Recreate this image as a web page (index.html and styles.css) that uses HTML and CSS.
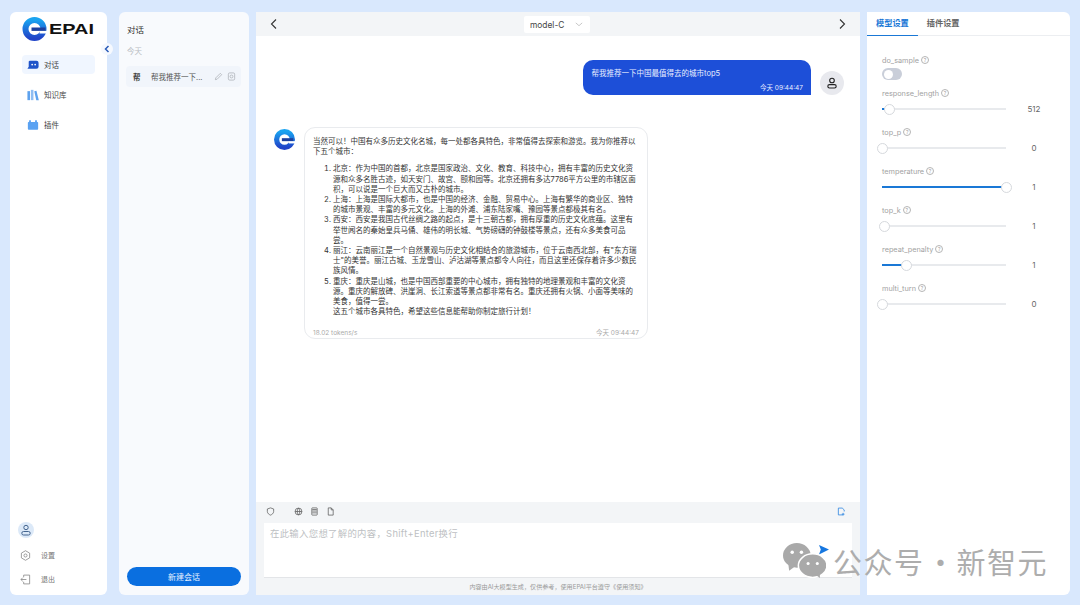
FILE: index.html
```html
<!DOCTYPE html>
<html lang="en">
<head>
    <meta charset="UTF-8">
    <meta name="viewport" content="width=device-width, initial-scale=1.0">
    <title>EPAI</title>
    <link rel="stylesheet" href="styles.css">
</head>
<body>

    <aside class="sidebar">
        <div class="logo">
            <svg class="logo-mark" viewBox="0 0 26 24">
                <defs>
                    <linearGradient id="logoGrad" x1="0" y1="0" x2="0" y2="1">
                        <stop offset="0" stop-color="#1aa3f0"/>
                        <stop offset="1" stop-color="#2044c8"/>
                    </linearGradient>
                </defs>
                <circle cx="12" cy="12" r="9" fill="none" stroke="url(#logoGrad)" stroke-width="6"/>
                <rect x="9" y="10.500" width="14" height="3.400" fill="#1c3f9e"/>
                <rect x="17" y="13.900" width="8" height="2.600" fill="#fff"/>
            </svg>
            <span class="logo-text">EPAI</span>
        </div>
        <button class="collapse-btn">
            <svg viewBox="0 0 10 10"><path d="M6.500 2 3.500 5l3 3" fill="none" stroke="#2a5bb8" stroke-width="1.500"/></svg>
        </button>

        <nav class="nav">
            <div class="nav-item active">
                <svg viewBox="0 0 14 12"><path d="M3 1h8a2.500 2.500 0 0 1 2.500 2.500V8A2.500 2.500 0 0 1 11 10.500H0.500L2 8V2z" fill="#1f54c9"/><circle cx="6" cy="5.500" r="1" fill="#fff"/><circle cx="9.500" cy="5.500" r="1" fill="#fff"/></svg>
                <span>对话</span>
            </div>
            <div class="nav-item">
                <svg viewBox="0 0 14 12"><rect x="0.500" y="1.500" width="3" height="10.500" fill="#5ea2ee"/><rect x="4.500" y="0" width="3" height="12" fill="#8fbdf2"/><path d="m8.500 1.500 2.500-.5 2.800 11h-3z" fill="#5ea2ee"/></svg>
                <span>知识库</span>
            </div>
            <div class="nav-item">
                <svg viewBox="0 0 14 12"><rect x="2.500" y="0.500" width="2" height="3" fill="#4f9bf0"/><rect x="9.500" y="0.500" width="2" height="3" fill="#4f9bf0"/><rect x="1" y="2.500" width="12" height="9" rx="1" fill="#5aa2f2"/></svg>
                <span>插件</span>
            </div>
        </nav>

        <div class="side-bottom">
            <div class="side-avatar">
                <svg viewBox="0 0 12 12"><circle cx="6" cy="3.500" r="2.200" fill="none" stroke="#44658f" stroke-width="1"/><rect x="1.800" y="7.500" width="8.400" height="3.500" rx="1.700" fill="none" stroke="#44658f" stroke-width="1"/></svg>
            </div>
            <div class="side-link">
                <svg viewBox="0 0 12 12"><path d="M6 .8 10.500 3.400v5.200L6 11.200 1.500 8.600V3.400z" fill="none" stroke="#8b8b8b" stroke-width=".9"/><circle cx="6" cy="6" r="1.700" fill="none" stroke="#8b8b8b" stroke-width=".9"/></svg>
                <span>设置</span>
            </div>
            <div class="side-link">
                <svg viewBox="0 0 12 12"><path d="M4 3.500V1.200h6.500v9.600H4V8.500M7 6H1M3 4 1 6l2 2" fill="none" stroke="#8b8b8b" stroke-width=".9"/></svg>
                <span>退出</span>
            </div>
        </div>
    </aside>

    <section class="sessions">
        <h2 class="sessions-title">对话</h2>
        <div class="sessions-day">今天</div>
        <div class="session">
            <span class="session-badge">帮</span>
            <span class="session-name">帮我推荐一下...</span>
            <svg viewBox="0 0 10 10"><path d="M1.500 8.500 2 6.500 7 1.500 8.500 3 3.500 8z" fill="none" stroke="#a9adb3" stroke-width=".8"/></svg>
            <svg viewBox="0 0 10 10"><rect x="1.500" y="1" width="7" height="8" rx="1.500" fill="none" stroke="#a9adb3" stroke-width=".8"/><circle cx="5" cy="5" r="1.600" fill="none" stroke="#a9adb3" stroke-width=".8"/></svg>
        </div>
        <button class="new-chat">新建会话</button>
    </section>

    <main class="chat">
        <header class="chat-top">
            <svg class="chev" viewBox="0 0 10 12"><path d="M7 1.500 2.500 6 7 10.500" fill="none" stroke="#333" stroke-width="1.100"/></svg>
            <div class="model-select">
                <span>model-C</span>
                <svg viewBox="0 0 10 6"><path d="M1 1l4 3.500L9 1" fill="none" stroke="#aaa" stroke-width=".8"/></svg>
            </div>
            <svg class="chev" viewBox="0 0 10 12"><path d="M3 1.500 7.500 6 3 10.500" fill="none" stroke="#333" stroke-width="1.100"/></svg>
        </header>

        <div class="messages">
            <div class="msg-user">
                <div class="bubble-user">
                    <p>帮我推荐一下中国最值得去的城市top5</p>
                    <time>今天 09:44:47</time>
                </div>
                <div class="user-avatar">
                    <svg viewBox="0 0 12 12"><circle cx="6" cy="3.500" r="2.300" fill="none" stroke="#222" stroke-width="1.100"/><rect x="1.800" y="7.600" width="8.400" height="3.400" rx="1.700" fill="none" stroke="#222" stroke-width="1.100"/></svg>
                </div>
            </div>

            <div class="msg-bot">
                <svg class="bot-avatar" viewBox="0 0 24 24">
                    <circle cx="12" cy="12" r="9" fill="none" stroke="url(#logoGrad)" stroke-width="6"/>
                    <rect x="9" y="10.500" width="13" height="3.400" fill="#1c3f9e"/>
                    <rect x="17" y="13.900" width="7" height="2.600" fill="#fff"/>
                </svg>
                <div class="bubble-bot">
                    <p>当然可以&#xFF01;中国有众多历史文化名城&#xFF0C;每一处都各具特色&#xFF0C;非常值得去探索和游览。我为你推荐以下五个城市&#xFF1A;</p>
                    <ol>
                        <li>北京&#xFF1A;作为中国的首都&#xFF0C;北京是国家政治、文化、教育、科技中心&#xFF0C;拥有丰富的历史文化资源和众多名胜古迹&#xFF0C;如天安门、故宫、颐和园等。北京还拥有多达7786平方公里的市辖区面积&#xFF0C;可以说是一个巨大而又古朴的城市。</li>
                        <li>上海&#xFF1A;上海是国际大都市&#xFF0C;也是中国的经济、金融、贸易中心。上海有繁华的商业区、独特的城市景观、丰富的多元文化。上海的外滩、浦东陆家嘴、豫园等景点都极其有名。</li>
                        <li>西安&#xFF1A;西安是我国古代丝绸之路的起点&#xFF0C;是十三朝古都&#xFF0C;拥有厚重的历史文化底蕴。这里有举世闻名的秦始皇兵马俑、雄伟的明长城、气势磅礴的钟鼓楼等景点&#xFF0C;还有众多美食可品尝。</li>
                        <li>丽江&#xFF1A;云南丽江是一个自然景观与历史文化相结合的旅游城市&#xFF0C;位于云南西北部&#xFF0C;有"东方瑞士"的美誉。丽江古城、玉龙雪山、泸沽湖等景点都令人向往&#xFF0C;而且这里还保存着许多少数民族风情。</li>
                        <li>重庆&#xFF1A;重庆是山城&#xFF0C;也是中国西部重要的中心城市&#xFF0C;拥有独特的地理景观和丰富的文化资源。重庆的解放碑、洪崖洞、长江索道等景点都非常有名。重庆还拥有火锅、小面等美味的美食&#xFF0C;值得一尝。<br>这五个城市各具特色&#xFF0C;希望这些信息能帮助你制定旅行计划&#xFF01;</li>
                    </ol>
                    <div class="bubble-foot">
                        <span>18.02 tokens/s</span>
                        <time>今天 09:44:47</time>
                    </div>
                </div>
            </div>
        </div>

        <footer class="composer">
            <div class="tools">
                <svg viewBox="0 0 10 10"><path d="M5 1 8.500 2.200V5C8.500 7 6.500 8.500 5 9 3.500 8.500 1.500 7 1.500 5V2.200z" fill="none" stroke="#555" stroke-width=".8"/></svg>
                <span class="tools-gap"></span>
                <svg viewBox="0 0 10 10"><circle cx="5" cy="5" r="3.800" fill="none" stroke="#555" stroke-width=".8"/><path d="M1.200 5h7.600M5 1.200c-2 2.400-2 5.200 0 7.600 2-2.400 2-5.200 0-7.600" fill="none" stroke="#555" stroke-width=".8"/></svg>
                <svg viewBox="0 0 10 10"><rect x="2" y="1" width="6" height="8" rx=".6" fill="none" stroke="#555" stroke-width=".8"/><path d="M2.500 6.500h5M2.500 4.500h5M2.500 2.800h5" stroke="#555" stroke-width=".8"/></svg>
                <svg viewBox="0 0 10 10"><path d="M2.500 1h3.300L8 3.200V9H2.500zM5.800 1v2.200H8" fill="none" stroke="#555" stroke-width=".8"/></svg>
                <svg class="tools-end" viewBox="0 0 10 10"><path d="M1.500 1.200h4.300L8 3.200V5M6.500 8.800h-5V1.200M6.800 6.500v3M5.300 8h3" fill="none" stroke="#2f86e0" stroke-width=".9"/></svg>
            </div>
            <div class="input-box">
                <span class="placeholder">在此输入您想了解的内容&#xFF0C;Shift+Enter换行</span>
                <svg class="send" viewBox="0 0 10 10"><path d="M0 0 10 4.500 0 9.500 1.800 4.500z" fill="#1677e0"/></svg>
            </div>
            <div class="disclaimer">内容由AI大模型生成&#xFF0C;仅供参考&#xFF0C;使用EPAI平台遵守《使用须知》</div>
        </footer>
    </main>

    <aside class="settings">
        <div class="tabs">
            <span class="tab active">模型设置</span>
            <span class="tab">插件设置</span>
        </div>
        <div class="params">
            <div class="param param-switch">
                <label>do_sample <i class="hint">?</i></label>
                <div class="toggle"></div>
            </div>
            <div class="param">
                <label>response_length <i class="hint">?</i></label>
                <div class="slider-row">
                    <div class="slider"><div class="fill" style="width: 6%"></div><div class="thumb" style="left: 6%"></div></div>
                    <span class="value">512</span>
                </div>
            </div>
            <div class="param">
                <label>top_p <i class="hint">?</i></label>
                <div class="slider-row">
                    <div class="slider"><div class="thumb" style="left: 0%"></div></div>
                    <span class="value">0</span>
                </div>
            </div>
            <div class="param">
                <label>temperature <i class="hint">?</i></label>
                <div class="slider-row">
                    <div class="slider"><div class="fill" style="width: 100%"></div><div class="thumb" style="left: 100%"></div></div>
                    <span class="value">1</span>
                </div>
            </div>
            <div class="param">
                <label>top_k <i class="hint">?</i></label>
                <div class="slider-row">
                    <div class="slider"><div class="thumb" style="left: 2%"></div></div>
                    <span class="value">1</span>
                </div>
            </div>
            <div class="param">
                <label>repeat_penalty <i class="hint">?</i></label>
                <div class="slider-row">
                    <div class="slider"><div class="fill" style="width: 20%"></div><div class="thumb" style="left: 20%"></div></div>
                    <span class="value">1</span>
                </div>
            </div>
            <div class="param">
                <label>multi_turn <i class="hint">?</i></label>
                <div class="slider-row">
                    <div class="slider"><div class="thumb" style="left: 0%"></div></div>
                    <span class="value">0</span>
                </div>
            </div>
        </div>
    </aside>

    <div class="watermark">
        <svg viewBox="0 0 42 34">
            <ellipse cx="13.500" cy="12" rx="13.500" ry="12" fill="#a9a9a9"/>
            <path d="M5 19 6 27 13 22z" fill="#a9a9a9"/>
            <ellipse cx="29" cy="22" rx="14" ry="11.500" fill="#a9a9a9" stroke="#fff" stroke-width="1.500"/>
            <path d="M32 31 36 34 36 28z" fill="#a9a9a9"/>
            <circle cx="9" cy="9" r="1.700" fill="#fff"/>
            <circle cx="18" cy="9" r="1.700" fill="#fff"/>
            <circle cx="24.500" cy="20" r="1.500" fill="#fff"/>
            <circle cx="33.500" cy="20" r="1.500" fill="#fff"/>
        </svg>
        <span>公众号</span><span class="dot">·</span><span>新智元</span>
    </div>

</body>
</html>
```

FILE: styles.css
```css
* {
    box-sizing: border-box;
}
html, body {
    height: 100%;
}
body {
    margin: 0;
    padding: 12px 10px 10px;
    display: flex;
    background-color: #d9e8fd;
    color: #333;
    font-family: Inter, "Noto Sans CJK SC", sans-serif;
    font-size: 7.5px;
    overflow: hidden;
    position: relative;
}
p, h2, ol {
    margin: 0;
    padding: 0;
}
svg {
    display: block;
}

/* left nav */
.sidebar {
    width: 97px;
    background-color: #fff;
    border-radius: 6px;
    position: relative;
    display: flex;
    flex-direction: column;
    padding: 6px 12px 11px;
}
.logo {
    display: flex;
    align-items: center;
    height: 22px;
}
.logo-mark {
    width: 27px;
    height: 24px;
}
.logo-text {
    font-family: "Liberation Sans", sans-serif;
    font-weight: 700;
    font-size: 14px;
    color: #111;
    transform: scaleX(1.42);
    transform-origin: left center;
}
.collapse-btn {
    position: absolute;
    top: 31px;
    right: -6px;
    width: 12px;
    height: 12px;
    padding: 1px;
    border: none;
    border-radius: 50%;
    background-color: #f6f9fe;
}
.nav {
    margin-top: 15px;
    display: flex;
    flex-direction: column;
    gap: 11px;
}
.nav-item {
    display: flex;
    align-items: center;
    gap: 5px;
    height: 19px;
    padding-left: 5px;
    border-radius: 4px;
    color: #444;
}
.nav-item svg {
    width: 12px;
    height: 12px;
}
.nav-item.active {
    background-color: #f0f6ff;
}
.side-bottom {
    margin-top: auto;
    margin-left: -4px;
}
.side-avatar {
    width: 16px;
    height: 16px;
    padding: 2px;
    border-radius: 50%;
    background-color: #dce9f8;
    margin-bottom: 12px;
}
.side-link {
    display: flex;
    align-items: center;
    gap: 10px;
    height: 10px;
    margin-bottom: 14px;
    margin-left: -3px;
    color: #777;
    padding-left: 5px;
    font-size: 7px;
}
.side-link:last-child {
    margin-bottom: 0;
}
.side-link svg {
    width: 11px;
    height: 11px;
}

/* conversations */
.sessions {
    width: 130px;
    margin-left: 12px;
    background-color: #f8fafd;
    border-radius: 6px;
    display: flex;
    flex-direction: column;
    padding: 12px 8px 9px;
}
.sessions-title {
    font-size: 8.5px;
    font-weight: 400;
    line-height: 12px;
}
.sessions-day {
    margin-top: 10px;
    color: #b9bdc3;
    line-height: 12px;
}
.session {
    margin: 8px 0 0 -1px;
    height: 21px;
    display: flex;
    align-items: center;
    padding: 0 5px 0 7px;
    background-color: #f1f5fb;
    border-radius: 4px;
}
.session svg {
    width: 9px;
    height: 9px;
    margin-left: 4px;
}
.session-badge {
    width: 9px;
    font-weight: 700;
    color: #444;
}
.session-name {
    margin-left: 9px;
    flex: 1;
    color: #555;
}
.new-chat {
    margin-top: auto;
    height: 19px;
    border: none;
    border-radius: 10px;
    background-color: #0a6fe0;
    color: #e6f1ff;
    font-family: inherit;
    font-size: 8px;
}

/* chat column */
.chat {
    width: 604px;
    margin-left: 7px;
    background-color: #fff;
    display: flex;
    flex-direction: column;
}
.chat-top {
    height: 24px;
    background-color: #f3f5f7;
    display: flex;
    align-items: center;
    justify-content: space-between;
    padding: 0 13px;
    position: relative;
}
.chev {
    width: 10px;
    height: 12px;
}
.model-select {
    width: 66px;
    height: 17px;
    margin-left: -2px;
    margin-top: 1px;
    background-color: #fff;
    border-radius: 2px;
    display: flex;
    align-items: center;
    justify-content: space-between;
    padding: 0 7px 0 6px;
    font-size: 8.4px;
    color: #444;
}
.model-select svg {
    width: 8px;
    height: 5px;
}
.messages {
    flex: 1;
    padding: 24px 16px 0 18px;
}
.msg-user {
    display: flex;
    justify-content: flex-end;
    gap: 9px;
}
.bubble-user {
    width: 228px;
    height: 35px;
    padding: 8px 8px 0 8.5px;
    background-color: #1d4fd8;
    border-radius: 10px 10px 0 10px;
    color: #e8eeff;
    line-height: 12px;
}
.bubble-user time {
    display: block;
    text-align: right;
    font-size: 6.5px;
    line-height: 9px;
    margin-top: 4px;
}
.user-avatar {
    width: 24px;
    height: 24px;
    margin-top: 11px;
    padding: 6px;
    border-radius: 50%;
    background-color: #e8e9ee;
}
.msg-bot {
    margin-top: 32px;
    display: flex;
    gap: 9px;
}
.bot-avatar {
    width: 21px;
    height: 21px;
    margin-top: 2px;
}
.bubble-bot {
    width: 344px;
    height: 212px;
    padding: 9px 8px 0;
    border: 1px solid #e9ebee;
    border-radius: 11px;
    line-height: 10.2px;
    color: #333;
}
.bubble-bot ol {
    margin-top: 7px;
    padding-left: 20px;
}
.bubble-foot {
    display: flex;
    justify-content: space-between;
    margin-top: 11px;
    font-size: 6.5px;
    color: #aaa;
}
.composer {
    height: 93px;
    background-color: #f3f5f7;
    padding: 0 8px;
}
.tools {
    height: 21px;
    display: flex;
    align-items: center;
    gap: 7px;
    padding: 0 6px 3px 2px;
}
.tools svg {
    width: 9px;
    height: 9px;
}
.tools-gap {
    width: 5px;
}
.tools .tools-end {
    margin-left: auto;
}
.input-box {
    height: 55px;
    background-color: #fff;
    border-bottom: 1px solid #e3e5e8;
    padding: 5px 6px;
    position: relative;
}
.placeholder {
    color: #bdbfc3;
    font-size: 9.4px;
    letter-spacing: .3px;
    line-height: 12px;
}
.send {
    position: absolute;
    top: 22px;
    right: 23px;
    width: 10px;
    height: 10px;
}
.disclaimer {
    text-align: center;
    font-size: 6.1px;
    line-height: 17px;
    color: #999;
}

/* settings */
.settings {
    width: 203px;
    margin-left: 7px;
    background-color: #fff;
    border-radius: 0 6px 6px 0;
}
.tabs {
    height: 24px;
    display: flex;
    border-bottom: 1px solid #eceef1;
}
.tab {
    padding: 0 9px;
    line-height: 23px;
    font-size: 8.2px;
    font-weight: 600;
    color: #666;
}
.tab.active {
    color: #1a78d6;
    border-bottom: 1px solid #1a78d6;
    height: 24px;
}
.params {
    padding: 18px 0 0 15px;
}
.param {
    height: 39px;
}
.param-switch {
    height: 33px;
}
.param label {
    display: flex;
    align-items: center;
    gap: 2px;
    height: 12px;
    color: #a2a2a2;
    font-size: 7.3px;
}
.hint {
    width: 8px;
    height: 8px;
    border: 1px solid #b5b5b5;
    border-radius: 50%;
    font-size: 5px;
    font-style: normal;
    line-height: 6px;
    text-align: center;
}
.toggle {
    width: 20px;
    height: 12px;
    margin-top: 2px;
    border-radius: 6px;
    background-color: #c9ced9;
    padding: 1.5px;
}
.toggle::before {
    content: "";
    display: block;
    width: 9px;
    height: 9px;
    border-radius: 50%;
    background-color: #fff;
}
.slider-row {
    display: flex;
    align-items: center;
    height: 16px;
    margin-top: 2px;
}
.slider {
    flex: none;
    width: 124px;
    height: 2px;
    background-color: #e8eaed;
    position: relative;
}
.fill {
    height: 2px;
    background-color: #1a78d6;
}
.thumb {
    position: absolute;
    top: -4.500px;
    width: 11px;
    height: 11px;
    margin-left: -5.500px;
    border: 1px solid #d6d9dd;
    border-radius: 50%;
    background-color: #fff;
}
.value {
    width: 56px;
    text-align: center;
    font-size: 8px;
    color: #666;
}

/* watermark over the page */
.watermark {
    position: absolute;
    left: 783px;
    top: 543px;
    display: flex;
    align-items: center;
    color: #adadad;
    font-family: "Noto Sans CJK SC", sans-serif;
    font-size: 29px;
    letter-spacing: 1.5px;
    line-height: 34px;
    white-space: nowrap;
}
.watermark svg {
    width: 43px;
    height: 35px;
    margin-right: 7px;
}
.watermark .dot {
    width: 32px;
    letter-spacing: 0;
    text-align: center;
}
```
